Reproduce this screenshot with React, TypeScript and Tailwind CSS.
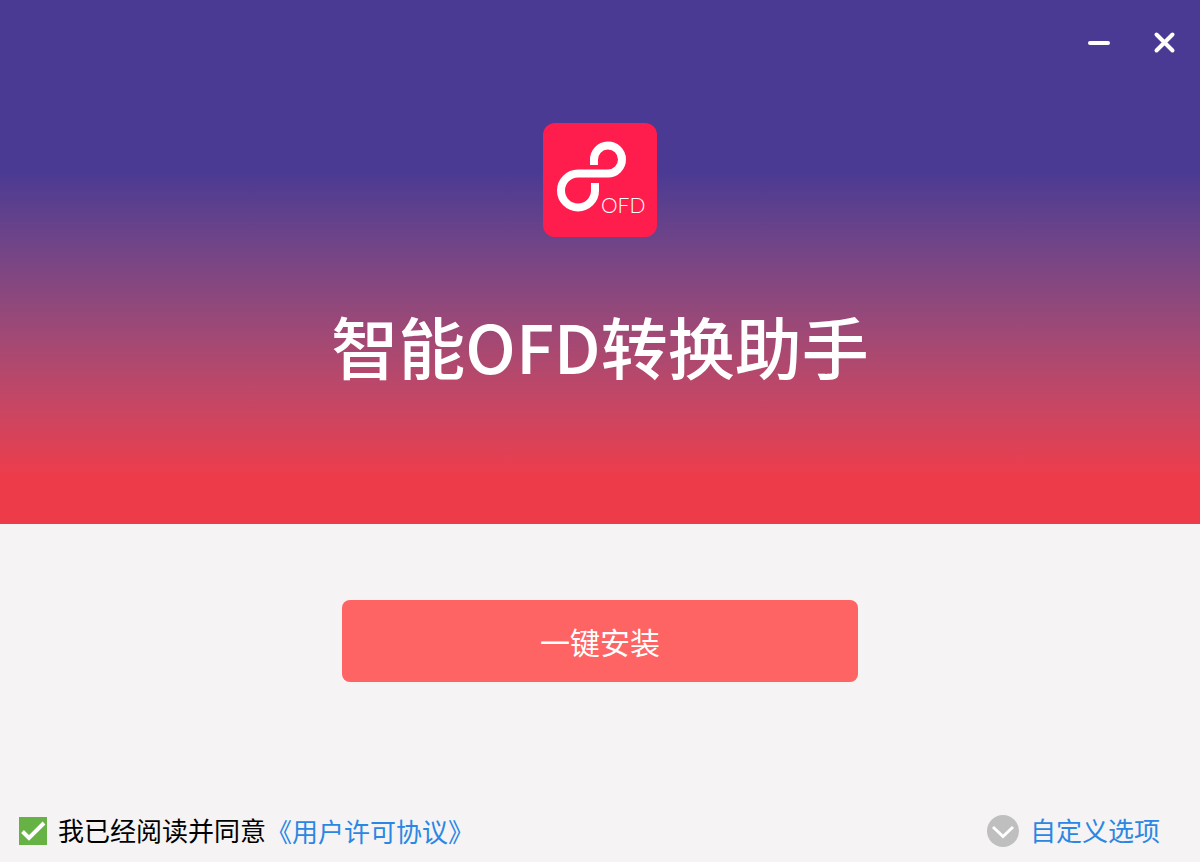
import { useState } from 'react';

function Logo() {
  return (
    <svg className="w-[114px] h-[114px]" viewBox="0 0 114 114" role="img" aria-label="OFD">
      <rect width="114" height="114" rx="12" fill="#ff1d4d" />
      <path
        d="M51 42V37A14 14 0 1 1 65 50.5H35A17 17 0 1 0 52 67.5V60"
        fill="none"
        stroke="#fff"
        strokeWidth="8"
      />
      <text x="58" y="90" fill="#fff" className="text-[21px] font-light font-['Lato',sans-serif]">
        OFD
      </text>
    </svg>
  );
}

function AgreeCheckbox({ checked, onChange }: {
  checked: boolean;
  onChange: (v: boolean) => void;
}) {
  return (
    <span className="relative w-7 h-7 shrink-0">
      <input
        id="agree"
        type="checkbox"
        checked={checked}
        onChange={e => onChange(e.target.checked)}
        className="block w-7 h-7 appearance-none border border-gray-400 bg-white checked:border-[#66b245] checked:bg-[#66b245] cursor-pointer"
      />
      {checked && (
        <svg className="absolute inset-0 w-7 h-7 pointer-events-none" viewBox="0 0 28 28" fill="none" stroke="#fff" strokeWidth="4">
          <path d="M3.5 14.5L10 21L25 6" />
        </svg>
      )}
    </span>
  );
}

export default function App() {
  const [agreed, setAgreed] = useState(true);
  const [showOptions, setShowOptions] = useState(false);

  return (
    <div className="min-h-screen flex flex-col bg-[#f5f3f4] font-['Liberation_Sans','Noto_Sans_CJK_SC',sans-serif]">
      {/* Header */}
      <header className="flex flex-col items-center pb-[139px] bg-linear-to-b from-[#4b3a93] from-33% to-[#ee3b4a] to-91%">
        <div className="self-stretch flex justify-end pr-1">
          <button type="button" aria-label="最小化" className="w-16 h-[83px] flex items-center justify-center">
            <svg className="w-6 h-6" viewBox="0 0 24 24" fill="none" stroke="#fff" strokeWidth="4" strokeLinecap="round">
              <path d="M2 13H20" />
            </svg>
          </button>
          <button type="button" aria-label="关闭" className="w-16 h-[83px] flex items-center justify-center">
            <svg className="w-6 h-6" viewBox="0 0 24 24" fill="none" stroke="#fff" strokeWidth="4" strokeLinecap="round">
              <path d="M4.5 4.5L20.5 20.5M20.5 4.5L4.5 20.5" />
            </svg>
          </button>
        </div>
        <div className="mt-10">
          <Logo />
        </div>
        <h1 className="mt-17 text-[67px] leading-[80px] font-medium text-white font-['Noto_Sans_CJK_SC',sans-serif]">
          智能OFD转换助手
        </h1>
      </header>

      {/* Install */}
      <main className="flex-1 flex justify-center items-start pt-[76px] pb-8">
        <button
          type="button"
          disabled={!agreed}
          className="w-[43%] h-[82px] pt-1 rounded-lg bg-[#ff6464] text-white text-[30px] disabled:opacity-60"
        >
          一键安装
        </button>
      </main>

      {/* Footer */}
      <footer className="flex items-center justify-between pl-[19px] pr-10 pb-[11px] text-[26px] leading-9">
        <div className="flex items-center">
          <AgreeCheckbox checked={agreed} onChange={setAgreed} />
          <label htmlFor="agree" className="pt-0.5 ml-[11px] text-black">我已经阅读并同意</label>
          <a href="#license" className="pt-1 text-[#2b87e3]">《用户许可协议》</a>
        </div>
        <button
          type="button"
          aria-expanded={showOptions}
          onClick={() => setShowOptions(s => !s)}
          className="flex items-center gap-[11px] text-[#2b87e3]"
        >
          <svg className="w-8 h-8" viewBox="0 0 32 32" fill="none">
            <circle cx="16" cy="16" r="16" fill="#bfbfbf" />
            <path d="M6 12L16 21.5L26 12" stroke="#fff" strokeWidth="3" />
          </svg>
          <span className="pt-0.5">自定义选项</span>
        </button>
      </footer>
    </div>
  );
}
